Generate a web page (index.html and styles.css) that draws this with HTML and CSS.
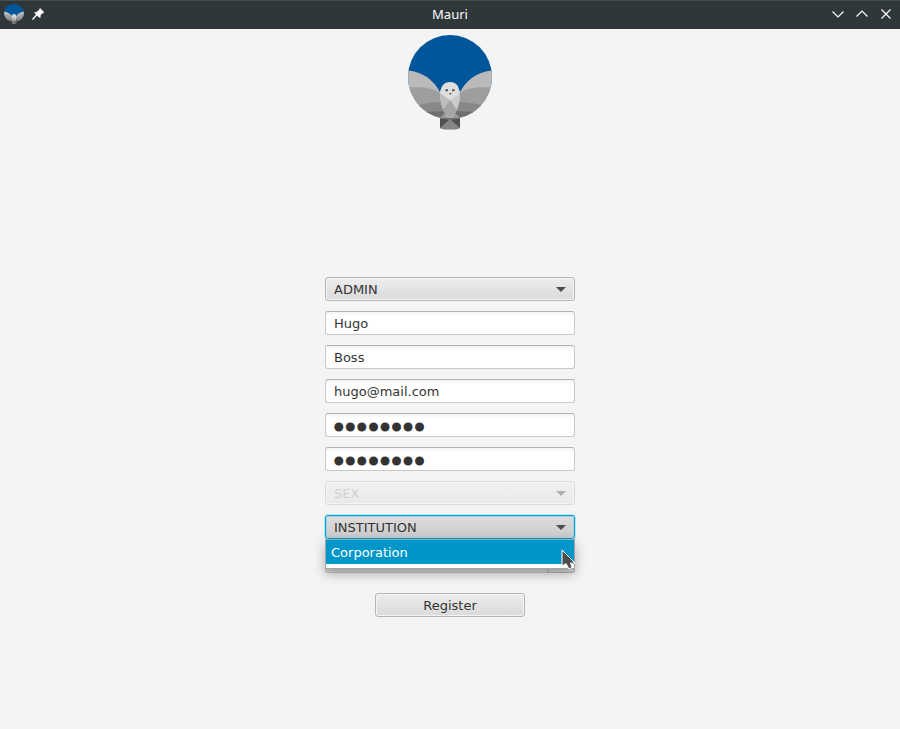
FILE: index.html
```html
<!DOCTYPE html>
<html lang="en">
<head>
<meta charset="utf-8">
<title>Mauri</title>
<link rel="stylesheet" href="styles.css">
</head>
<body>
<svg class="defs" aria-hidden="true">
  <defs>
    <clipPath id="disc"><circle cx="150" cy="140" r="126"/></clipPath>
  </defs>
  <symbol id="owl" viewBox="24 14 252 285" preserveAspectRatio="none">
    <g clip-path="url(#disc)">
      <rect x="24" y="14" width="252" height="252" fill="#00559b"/>
      <path fill="#bababa" d="M20 120C65 123 102 148 120 186H180C198 148 235 123 280 120V270H20Z"/>
      <path fill="#9e9e9e" d="M20 171H68C92 174 110 180 121 189L150 210L179 189C190 180 208 174 232 171H280V270H20Z"/>
      <path fill="#888" d="M20 235C50 224 82 216 124 215H176C218 216 250 224 280 235V270H20Z"/>
      <path fill="#6f6f6f" d="M20 258C60 246 95 242 131 243H169C205 242 240 246 280 258V270H20Z"/>
      <path fill="#9a9a9a" d="M112 270L134 249L150 265L166 249L188 270Z"/>
    </g>
    <path fill="#dfdfdf" d="M121 192C121 167 132 155 150 155S179 167 179 192C180 222 169 250 150 267C131 250 120 222 121 192Z"/>
    <path fill="#bdbdbd" d="M121 186L150 209L165 231L150 267C131 250 120 222 121 186Z"/>
    <path fill="#cbcbcb" d="M179 190L150 209L135 231L150 267C169 250 180 222 179 190Z"/>
    <path fill="#a5a5a5" d="M150 209L172 240L150 267L128 240Z"/>
    <path fill="#dfdfdf" d="M121 188L150 209L179 188V180H121Z"/>
    <path fill="#505050" d="M120 264H180V293L168 297H132L120 293Z"/>
    <path fill="#707070" d="M120 264H180L150 270Z"/>
    <path fill="#858585" d="M150 266L180 293L168 297H132L120 293Z"/>
    <path fill="#555" d="M136 177H144V183H136ZM156 177H164V183H156ZM147 188H155L151 194Z"/>
  </symbol>
</svg>
<header class="titlebar">
  <div class="titlebar-side">
    <svg class="app-icon" aria-hidden="true"><use href="#owl"/></svg>
    <button class="window-button pin" aria-label="Pin window">
      <svg width="12" height="12" viewBox="0 0 12 12"><path d="M8 0L12 4L11 5.500L10 5.500L8.500 7.500V10L6.500 9L5 7.500L1 12L0 11L4 6.500L2 4.500L4.500 4L7 2Z"/></svg>
    </button>
  </div>
  <h1 class="title">Mauri</h1>
  <div class="titlebar-side titlebar-controls">
    <button class="window-button" aria-label="Minimize"><svg width="12" height="12" viewBox="0 0 12 12"><path d="M.5 3.500L6 9L11.500 3.500"/></svg></button>
    <button class="window-button" aria-label="Maximize"><svg width="12" height="12" viewBox="0 0 12 12"><path d="M.5 8.500L6 3L11.500 8.500"/></svg></button>
    <button class="window-button" aria-label="Close"><svg width="12" height="12" viewBox="0 0 12 12"><path d="M1.500 1.500L10.500 10.500M10.500 1.500L1.500 10.500"/></svg></button>
  </div>
</header>
<main class="content">
  <svg class="logo" role="img" aria-label="Mauri owl"><use href="#owl"/></svg>
  <form class="form">
    <div class="combo"><select class="field" aria-label="Role"><option>ADMIN</option></select></div>
    <input class="field" type="text" aria-label="First name" value="Hugo">
    <input class="field" type="text" aria-label="Last name" value="Boss">
    <input class="field" type="email" aria-label="Email" value="hugo@mail.com">
    <input class="field password" type="password" aria-label="Password" value="password">
    <input class="field password" type="password" aria-label="Repeat password" value="password">
    <div class="combo disabled"><select class="field" aria-label="Sex" disabled><option>SEX</option></select></div>
    <div class="combo open">
      <select class="field" aria-label="Institution"><option>INSTITUTION</option></select>
      <ul class="popup" role="listbox" aria-label="Institutions">
        <li class="popup-item" role="option" aria-selected="true">Corporation</li>
      </ul>
      <svg class="pointer" width="15" height="22" viewBox="0 0 15 22" aria-hidden="true"><path d="M1 1V17L5 14.500L8 20L11 18.500L9.500 14H14Z"/></svg>
    </div>
    <div class="date"><input class="field" type="text" aria-label="Birth date"><button class="date-button" type="button" aria-label="Choose date"></button></div>
    <button class="register" type="button">Register</button>
  </form>
</main>
</body>
</html>
```
FILE: styles.css
```css
* {
  box-sizing: border-box;
}

body {
  margin: 0;
  min-height: 100vh;
  background: #f4f4f4;
  color: #333;
  font: 13px/16px "DejaVu Sans", sans-serif;
}

button,
input,
select {
  margin: 0;
  font: inherit;
  color: inherit;
}

.defs {
  position: absolute;
  width: 0;
  height: 0;
}

.titlebar {
  display: flex;
  align-items: center;
  justify-content: space-between;
  height: 29px;
  padding: 0 4px 1px;
  background: #30373a;
  box-shadow: inset 0 1px #454c4f;
  color: #fcfcfc;
}

.titlebar-side {
  display: flex;
  flex: 1 1 0;
  align-items: center;
  gap: 8px;
}

.titlebar-controls {
  justify-content: flex-end;
  gap: 12px;
  padding-right: 4px;
}

.title {
  margin: 0;
  padding-left: 4px;
  font: 13px/16px "Noto Sans", sans-serif;
}

.app-icon {
  width: 20px;
  height: 20px;
}

.window-button {
  display: flex;
  padding: 0;
  border: 0;
  background: none;
}

.window-button path {
  fill: none;
  stroke: #fcfcfc;
  stroke-width: 1.2;
}

.pin path {
  fill: #fcfcfc;
  stroke: none;
}

.content {
  display: flex;
  flex-direction: column;
  align-items: center;
  padding: 6px 16px 16px;
}

.logo {
  width: 84px;
  height: 95px;
}

.form {
  display: flex;
  flex-direction: column;
  gap: 10px;
  width: 100%;
  max-width: 250px;
  margin-top: 147px;
}

.field {
  display: block;
  width: 100%;
  height: 24px;
  padding: 0 8px;
  border: 1px solid #c8c8c8;
  border-top-color: #b3b3b3;
  border-radius: 3px;
  outline: 0;
  background: linear-gradient(#f2f2f2, #fff 4px);
}

.password {
  padding: 6px 7px 0;
  font: 33px/16px "Liberation Serif", serif;
  -webkit-text-stroke: 1px #333;
}

.combo,
.date {
  position: relative;
}

.combo .field {
  padding-top: 1px;
  appearance: none;
  border-color: #b5b5b5;
  background: linear-gradient(#ededed, #dadada);
  box-shadow: inset 0 0 0 1px #f5f5f5;
}

.combo::after {
  content: "";
  position: absolute;
  top: 10px;
  right: 9px;
  border: 5px solid transparent;
  border-top-color: #4d4d4d;
  border-bottom: 0;
  pointer-events: none;
}

.disabled {
  opacity: 0.4;
}

.disabled .field {
  color: #999;
  opacity: 1;
}

.open {
  z-index: 1;
}

.open .field {
  border-color: #039ed3;
  background: linear-gradient(#dedede, #cacaca);
  box-shadow: inset 0 0 0 1px #9bd4e9, 0 0 0 1px #bfe2ee;
}

.popup {
  position: absolute;
  top: 24px;
  left: 0;
  right: 0;
  margin: 0;
  padding: 0 0 4px;
  border: 1px solid #a5a5a5;
  background: #fff;
  box-shadow: 0 5px 12px rgba(0, 0, 0, 0.3);
  list-style: none;
}

.popup-item {
  padding: 5px 5px 3px;
  background: #0096c9;
  color: #fff;
}

.pointer {
  position: absolute;
  top: 34px;
  right: -1px;
  z-index: 1;
}

.pointer path {
  fill: #4d4d4d;
  stroke: #fff;
}

.date {
  display: flex;
}

.date .field {
  background: #dadada;
}

.date-button {
  position: absolute;
  inset: 0 0 0 auto;
  width: 28px;
  border: 1px solid #b5b5b5;
  border-radius: 0 3px 3px 0;
  background: #dadada;
}

.register {
  align-self: center;
  width: 150px;
  height: 24px;
  margin-top: 10px;
  padding: 1px 0 0;
  border: 1px solid #b5b5b5;
  border-radius: 3px;
  background: linear-gradient(#ededed, #dadada);
  box-shadow: inset 0 0 0 1px #f5f5f5;
}
```
